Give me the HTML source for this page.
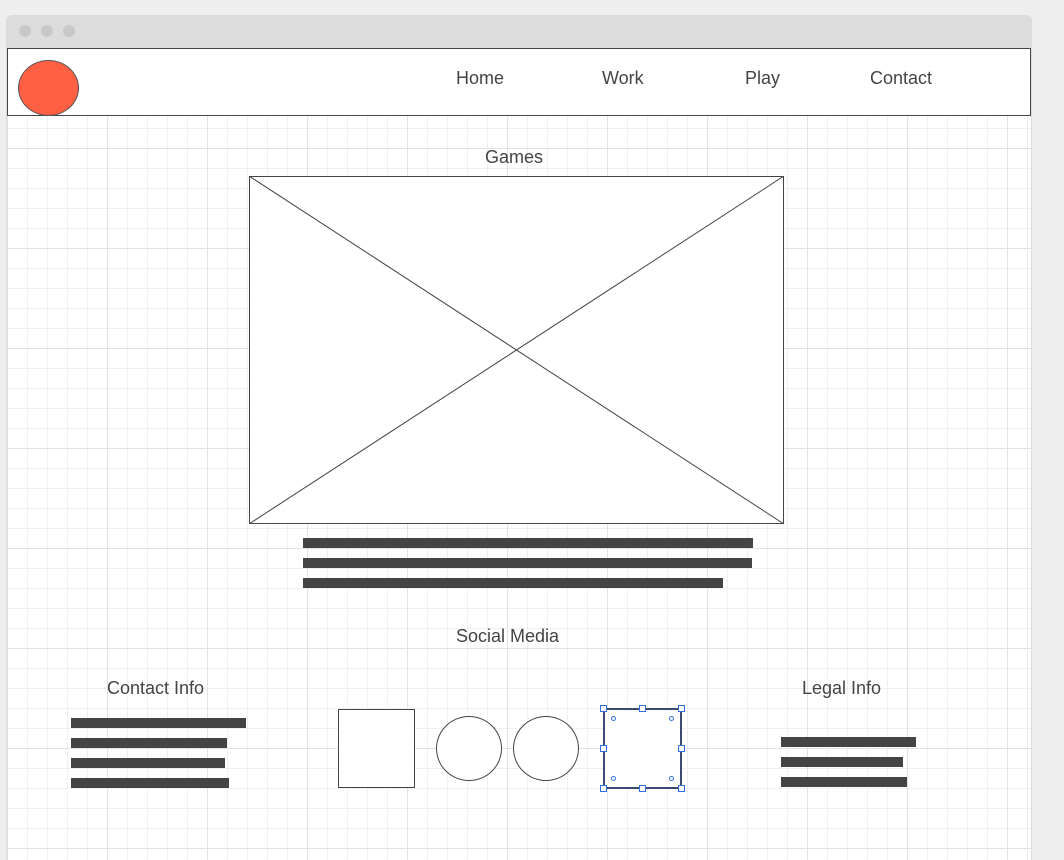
<!DOCTYPE html>
<html style="overflow:hidden"><head><style>
body{margin:0;width:1064px;height:860px;background:#eeeeee;position:relative;overflow:hidden;font-family:"Liberation Sans",sans-serif;color:#444}
.win{position:absolute;left:6px;top:15px;width:1026px;height:845px;background:#dcdcdc;border-radius:6px 6px 0 0}
.dot{position:absolute;top:10px;width:12px;height:12px;border-radius:50%;background:#c8c8c8}
.grid{position:absolute;left:7px;top:48px;width:1024px;height:812px;background-color:#fff;
background-image:linear-gradient(#e2e2e2 1px,transparent 1px),linear-gradient(90deg,#e2e2e2 1px,transparent 1px),linear-gradient(#efefef 1px,transparent 1px),linear-gradient(90deg,#efefef 1px,transparent 1px);
background-size:100px 100px,100px 100px,20px 20px,20px 20px}
.hdr{position:absolute;left:7px;top:48px;width:1022px;height:66px;border:1px solid #444;background:#fff}
.t{position:absolute;font-size:18px;white-space:nowrap}
.bar{position:absolute;height:10px;background:#444}
.abs{position:absolute}
.h{position:absolute;width:5px;height:5px;border:1px solid #2f6fe0;background:#fff}
.c{position:absolute;width:3px;height:3px;border:1px solid #2f6fe0;border-radius:50%;background:#fff}
</style></head><body>
<div class="win"><div class="dot" style="left:13px"></div><div class="dot" style="left:35px"></div><div class="dot" style="left:57px"></div></div>
<div class="grid"></div>
<div class="hdr"></div>
<div class="abs" style="left:18px;top:60px;width:59px;height:54px;border:1px solid #555;border-radius:50%;background:#ff5f43"></div>
<div class="t" style="left:456px;top:68px">Home</div>
<div class="t" style="left:602px;top:68px">Work</div>
<div class="t" style="left:745px;top:68px">Play</div>
<div class="t" style="left:870px;top:68px">Contact</div>
<div class="t" style="left:485px;top:147px">Games</div>
<svg class="abs" style="left:249px;top:176px" width="536" height="348"><rect x="0.5" y="0.5" width="534" height="347" fill="#fff" stroke="#444"/><line x1="0" y1="0" x2="535" y2="348" stroke="#444"/><line x1="535" y1="0" x2="0" y2="348" stroke="#444"/></svg>
<div class="bar" style="left:303px;top:538px;width:450px"></div>
<div class="bar" style="left:303px;top:558px;width:449px"></div>
<div class="bar" style="left:303px;top:578px;width:420px"></div>
<div class="t" style="left:456px;top:626px">Social Media</div>
<div class="t" style="left:107px;top:678px">Contact Info</div>
<div class="t" style="left:802px;top:678px">Legal Info</div>
<div class="bar" style="left:71px;top:718px;width:175px"></div>
<div class="bar" style="left:71px;top:738px;width:156px"></div>
<div class="bar" style="left:71px;top:758px;width:154px"></div>
<div class="bar" style="left:71px;top:778px;width:158px"></div>
<div class="bar" style="left:781px;top:737px;width:135px"></div>
<div class="bar" style="left:781px;top:757px;width:122px"></div>
<div class="bar" style="left:781px;top:777px;width:126px"></div>
<div class="abs" style="left:338px;top:709px;width:75px;height:77px;border:1px solid #444;background:#fff"></div>
<div class="abs" style="left:436px;top:716px;width:64px;height:63px;border:1px solid #444;border-radius:50%;background:#fff"></div>
<div class="abs" style="left:513px;top:716px;width:64px;height:63px;border:1px solid #444;border-radius:50%;background:#fff"></div>
<div class="abs" style="left:603px;top:708px;width:75px;height:77px;border:2px solid #3a4a70;background:#fff"></div>
<div class="h" style="left:600px;top:705px"></div><div class="h" style="left:639px;top:705px"></div><div class="h" style="left:678px;top:705px"></div>
<div class="h" style="left:600px;top:745px"></div><div class="h" style="left:678px;top:745px"></div>
<div class="h" style="left:600px;top:785px"></div><div class="h" style="left:639px;top:785px"></div><div class="h" style="left:678px;top:785px"></div>
<div class="c" style="left:611px;top:716px"></div><div class="c" style="left:669px;top:716px"></div>
<div class="c" style="left:611px;top:776px"></div><div class="c" style="left:669px;top:776px"></div>
</body></html>
